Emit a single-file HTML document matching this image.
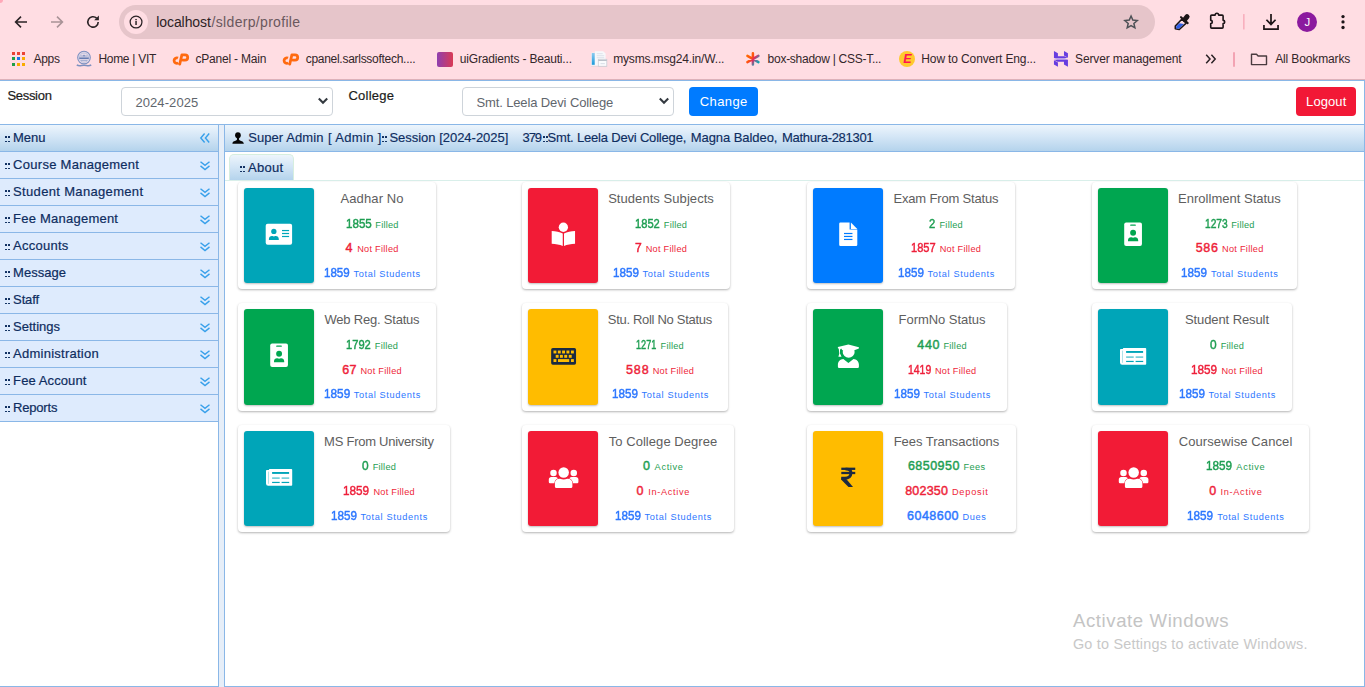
<!DOCTYPE html>
<html><head><meta charset="utf-8"><title>profile</title>
<style>
html,body{margin:0;padding:0;}
body{width:1365px;height:687px;overflow:hidden;position:relative;background:#fff;font-family:"Liberation Sans",sans-serif;}
.t{position:absolute;white-space:nowrap;line-height:1em;font-family:"Liberation Sans",sans-serif;}
.b{position:absolute;box-sizing:border-box;}
svg{position:absolute;overflow:visible;}
</style></head><body>
<div class="b" style="left:0px;top:0px;width:1365px;height:79px;background:#FFDDE3;"></div>
<div class="b" style="left:0px;top:79px;width:1365px;height:1px;background:#DDB2BA;"></div>
<div class="b" style="left:-3px;top:-3px;width:6px;height:6px;background:#FFA8B8;border-radius:3px;filter:blur(0.6px);"></div>
<div class="b" style="left:119px;top:5px;width:1036px;height:34px;background:#E6C5CA;border-radius:17px;"></div>
<div class="b" style="left:123.7px;top:9.9px;width:24.2px;height:24.2px;background:#FFDDE3;border-radius:12.100px;"></div>
<svg style="left:128px;top:14px" width="16" height="16" viewBox="0 0 16 16"><circle cx="8.050" cy="8.050" r="5.900" fill="none" stroke="#2b2326" stroke-width="1.250"/><rect x="7.250" y="7" width="1.600" height="4" fill="#3b3034"/><rect x="7.250" y="4.950" width="1.600" height="1.300" fill="#3b3034"/></svg>
<svg style="left:13px;top:14px" width="16" height="16" viewBox="0 0 16 16"><path d="M14 8H3.2M8 2.6L2.6 8L8 13.4" fill="none" stroke="#2b2326" stroke-width="1.6"/></svg>
<svg style="left:49px;top:14px" width="16" height="16" viewBox="0 0 16 16"><path d="M2 8H12.8M8 2.6L13.4 8L8 13.4" fill="none" stroke="#A99397" stroke-width="1.6"/></svg>
<svg style="left:85px;top:14px" width="16" height="16" viewBox="0 0 16 16"><path d="M13.2 8A5.2 5.2 0 1 1 11.6 4.2" fill="none" stroke="#2b2326" stroke-width="1.6"/><path d="M13.9 1.6V6.3H9.2Z" fill="#2b2326"/></svg>
<span class="t" style="left:156.30px;top:15px;font-size:14px;color:#2c2225;letter-spacing:-0.091px;">localhost</span>
<span class="t" style="left:211.60px;top:15px;font-size:14px;color:#6a585d;letter-spacing:0.316px;">/slderp/profile</span>
<svg style="left:1123px;top:14px" width="16" height="16" viewBox="0 0 16 16"><path d="M8.05 2.05L9.81 6.12L14.23 6.54L10.90 9.48L11.87 13.81L8.05 11.55L4.23 13.81L5.20 9.48L1.87 6.54L6.29 6.12Z" fill="none" stroke="#4d5156" stroke-width="1.500" stroke-linejoin="miter"/></svg>
<svg style="left:1165px;top:5px" width="130" height="35.050" viewBox="0 0 1365 368"><path d="M108 250V222L178 148L222 190L150 258Z" fill="#FFDDE3" stroke="#1c1417" stroke-width="16" stroke-linejoin="round"/><path d="M116 246V226L150 192L198 200L146 250Z" fill="#2F5FE6"/><path d="M168 128L238 190" stroke="#1c1417" stroke-width="22" stroke-linecap="round"/><path d="M208 152L232 122" stroke="#1c1417" stroke-width="52" stroke-linecap="round"/><path d="M480 116Q480 106 490 106H527A18 19 0 0 1 563 106H600Q610 106 610 116V161A17 17 0 0 1 610 195V233Q610 243 600 243H490Q480 243 480 233V195A17 17 0 0 0 480 161Z" fill="none" stroke="#1c1417" stroke-width="17" stroke-linejoin="round"/><rect x="821" y="95" width="14" height="163" rx="6" fill="#F7A6B6"/><path d="M1113 95V203M1065 155L1113 204L1161 155" fill="none" stroke="#1c1417" stroke-width="18"/><path d="M1039 210V253H1187V210" fill="none" stroke="#1c1417" stroke-width="18"/></svg>
<div class="b" style="left:1297px;top:12px;width:20px;height:20px;background:#8B1A9E;border-radius:10px;"></div>
<span class="t" style="left:1304.60px;top:17px;font-size:11.5px;color:#fff;letter-spacing:-0.150px;">J</span>
<svg style="left:1335px;top:12px" width="16" height="20" viewBox="0 0 16 20"><circle cx="8" cy="4.550" r="1.650" fill="#1c1417"/><circle cx="8" cy="9.950" r="1.650" fill="#1c1417"/><circle cx="8" cy="15.500" r="1.650" fill="#1c1417"/></svg>
<div class="b" style="left:12.0px;top:52.2px;width:3px;height:3px;background:#EA4335;"></div>
<div class="b" style="left:17.2px;top:52.2px;width:3px;height:3px;background:#EA4335;"></div>
<div class="b" style="left:22.4px;top:52.2px;width:3px;height:3px;background:#EA4335;"></div>
<div class="b" style="left:12.0px;top:57.400000000000006px;width:3px;height:3px;background:#1E9E48;"></div>
<div class="b" style="left:17.2px;top:57.400000000000006px;width:3px;height:3px;background:#1A73E8;"></div>
<div class="b" style="left:22.4px;top:57.400000000000006px;width:3px;height:3px;background:#F9AB00;"></div>
<div class="b" style="left:12.0px;top:62.6px;width:3px;height:3px;background:#1E9E48;"></div>
<div class="b" style="left:17.2px;top:62.6px;width:3px;height:3px;background:#F9AB00;"></div>
<div class="b" style="left:22.4px;top:62.6px;width:3px;height:3px;background:#F9AB00;"></div>
<span class="t" style="left:33.40px;top:53px;font-size:12px;color:#33262a;letter-spacing:-0.253px;">Apps</span>
<span class="t" style="left:98.40px;top:53px;font-size:12px;color:#33262a;letter-spacing:-0.287px;">Home | VIT</span>
<span class="t" style="left:195.50px;top:53px;font-size:12px;color:#33262a;letter-spacing:-0.207px;">cPanel - Main</span>
<span class="t" style="left:305.70px;top:53px;font-size:12px;color:#33262a;letter-spacing:-0.279px;">cpanel.sarlssoftech....</span>
<span class="t" style="left:459.80px;top:53px;font-size:12px;color:#33262a;letter-spacing:-0.175px;">uiGradients - Beauti...</span>
<span class="t" style="left:613.20px;top:53px;font-size:12px;color:#33262a;letter-spacing:-0.156px;">mysms.msg24.in/W...</span>
<span class="t" style="left:767.60px;top:53px;font-size:12px;color:#33262a;letter-spacing:-0.268px;">box-shadow | CSS-T...</span>
<span class="t" style="left:921.30px;top:53px;font-size:12px;color:#33262a;letter-spacing:-0.128px;">How to Convert Eng...</span>
<span class="t" style="left:1075.10px;top:53px;font-size:12px;color:#33262a;letter-spacing:-0.139px;">Server management</span>
<span class="t" style="left:1275.20px;top:53px;font-size:12px;color:#33262a;letter-spacing:-0.132px;">All Bookmarks</span>
<svg style="left:76px;top:50px" width="16" height="18" viewBox="0 0 16 18"><circle cx="8" cy="7.600" r="6.300" fill="#E9DCEA" stroke="#7C90C0" stroke-width="1.100"/><circle cx="8" cy="7.600" r="4.600" fill="none" stroke="#A9B6D6" stroke-width="0.700"/><path d="M3.300 8.200h9.400" stroke="#5F78B0" stroke-width="1.500"/><path d="M4.300 6h7.400M5 10.300h6" stroke="#8FA0CA" stroke-width="0.900"/><path d="M6.800 6.200l1.200-1.800 1.200 1.800z" fill="#6E84B8"/><path d="M0.800 14.800c2.400 2 4.400.400 7.200.400s4.800 1.600 7.200-.400" fill="none" stroke="#7C90C0" stroke-width="1.500"/></svg>
<svg style="left:170px;top:50px" width="22" height="18" viewBox="0 0 22 18"><g fill="none" stroke="#FF6A10" stroke-width="2.800" stroke-linecap="round" stroke-linejoin="round"><path d="M8 8.100A2.750 2.750 0 1 0 8.300 12.900" stroke-linecap="butt"/><path d="M9.700 14.200L11.900 4.800H15A2.700 2.700 0 0 1 15 10.200H13"/></g></svg>
<svg style="left:280.3px;top:50px" width="22" height="18" viewBox="0 0 22 18"><g fill="none" stroke="#FF6A10" stroke-width="2.800" stroke-linecap="round" stroke-linejoin="round"><path d="M8 8.100A2.750 2.750 0 1 0 8.300 12.900" stroke-linecap="butt"/><path d="M9.700 14.200L11.900 4.800H15A2.700 2.700 0 0 1 15 10.200H13"/></g></svg>
<div class="b" style="left:437px;top:51.5px;width:15.5px;height:15.5px;background:linear-gradient(90deg,#8E3FB0,#D93A55);border-radius:2px;"></div>
<svg style="left:591px;top:51px" width="16" height="16" viewBox="0 0 16 16"><defs><linearGradient id="gb" x1="0" y1="0" x2="0" y2="1"><stop offset="0" stop-color="#8CCBF0"/><stop offset="1" stop-color="#1C9ADB"/></linearGradient></defs><rect x="0.3" y="1.6" width="3.4" height="13.6" fill="#F1F4F8"/><rect x="0.8" y="2" width="3" height="11.8" fill="url(#gb)"/><path d="M3.900 0.200h8.300l2.400 2.400v12.100H3.900z" fill="#F6F8FB"/><path d="M5.700 2.700h6M5.700 4.700h7.500M5.700 6.700h7.500" stroke="#DDE2EA" stroke-width="1"/><rect x="7.300" y="8.300" width="8.500" height="7.200" fill="#FAFBFD" stroke="#C9CED6" stroke-width="0.800"/><path d="M7.300 9.400h8.500" stroke="#B8BEC8" stroke-width="1.100"/><path d="M9.500 12.600h4.300" stroke="#DDE2EA" stroke-width="1.200"/><path d="M0.200 15.300h15.600" stroke="#D9CCD2" stroke-width="0.600"/></svg>
<svg style="left:745px;top:51px" width="16" height="16" viewBox="0 0 16 16"><defs><linearGradient id="ga" gradientUnits="userSpaceOnUse" x1="2" y1="3" x2="14" y2="12"><stop offset="0" stop-color="#FF6E00"/><stop offset="0.38" stop-color="#FF5210"/><stop offset="0.550" stop-color="#E02A62"/><stop offset="0.750" stop-color="#5E7FA0"/><stop offset="1" stop-color="#00AAB2"/></linearGradient></defs><path d="M7.900 2.200v11.400M2.400 4.900l11 6.200M13.400 4.900l-11 6.200" stroke="url(#ga)" stroke-width="2.500" stroke-linecap="round" fill="none"/></svg>
<div class="b" style="left:898.8px;top:50.8px;width:16.3px;height:16.3px;background:#FFC92E;border-radius:8.200px;"></div>
<span class="t" style="left:903.2px;top:53px;font-size:12.500px;font-weight:bold;font-style:italic;color:#FF1250;">E</span>
<svg style="left:1053px;top:51px" width="16" height="16" viewBox="0 0 16 16"><path d="M0.950 -0.080L4.920 2.190V5.220H11.540L14.900 7.110H0.950z" fill="#673DE0"/><path d="M10.970 -0.080L14.940 2.190V6.730L10.970 4.460z" fill="#673DE0"/><path d="M0.950 7.110H11.500L14.940 8.810H4.350z" fill="#B9A0EA"/><path d="M1 8.810H14.940V15.810L10.970 13.540V10.700H4.350z" fill="#673DE0"/><path d="M0.950 9.190L4.920 11.460V15.810L0.950 13.540z" fill="#673DE0"/></svg>
<svg style="left:1205px;top:53px" width="12" height="12" viewBox="0 0 12 12"><path d="M1.200 1.800L5 6L1.200 10.200M6.400 1.800L10.200 6L6.400 10.200" fill="none" stroke="#2b2326" stroke-width="1.5"/></svg>
<div class="b" style="left:1233.3px;top:51.5px;width:1.5px;height:15px;background:#F3A3B3;border-radius:1px;"></div>
<svg style="left:1250px;top:52px" width="18" height="14" viewBox="0 0 18 14"><path d="M1.500 2.200h5l1.600 1.800h8.400v8.600H1.500z" fill="none" stroke="#4a3b3f" stroke-width="1.400" stroke-linejoin="round"/></svg>
<div class="b" style="left:-1px;top:80px;width:1366px;height:45px;background:#fff;border:1px solid #8AB7E7;"></div>
<span class="t" style="left:7.40px;top:89px;font-size:13px;color:#1c1c1c;letter-spacing:-0.297px;-webkit-text-stroke:0.2px #1c1c1c;">Session</span>
<span class="t" style="left:348.40px;top:89px;font-size:13px;color:#1c1c1c;letter-spacing:0.255px;-webkit-text-stroke:0.2px #1c1c1c;">College</span>
<div class="b" style="left:121px;top:87px;width:211.5px;height:28.5px;background:#fff;border:1px solid #ced4da;border-radius:4px;"></div>
<svg style="left:317.1px;top:95px" width="12" height="12" viewBox="0 0 12 12"><path d="M1.800 3.600L6 7.800L10.200 3.600" fill="none" stroke="#343a40" stroke-width="2.100"/></svg>
<div class="b" style="left:462px;top:87px;width:211.5px;height:28.5px;background:#fff;border:1px solid #ced4da;border-radius:4px;"></div>
<svg style="left:658.1px;top:95px" width="12" height="12" viewBox="0 0 12 12"><path d="M1.800 3.600L6 7.800L10.200 3.600" fill="none" stroke="#343a40" stroke-width="2.100"/></svg>
<span class="t" style="left:135.40px;top:96px;font-size:13px;color:#5f666d;letter-spacing:0.095px;">2024-2025</span>
<span class="t" style="left:476.40px;top:96px;font-size:13px;color:#5f666d;letter-spacing:-0.118px;">Smt. Leela Devi College</span>
<div class="b" style="left:689px;top:87px;width:69px;height:29px;background:#007BFF;border-radius:4px;"></div>
<span class="t" style="left:699.80px;top:95px;font-size:13px;color:#fff;letter-spacing:0.387px;">Change</span>
<div class="b" style="left:1296px;top:87px;width:60px;height:29px;background:#F21836;border-radius:4px;"></div>
<span class="t" style="left:1306.10px;top:95px;font-size:13px;color:#fff;letter-spacing:0.084px;">Logout</span>
<div class="b" style="left:-1px;top:124px;width:220px;height:563px;background:#fff;border:1px solid #8AB7E7;"></div>
<div class="b" style="left:219px;top:125px;width:5px;height:562px;background:#E6EEF8;"></div>
<div class="b" style="left:-1px;top:124px;width:220px;height:28px;background:linear-gradient(to bottom,#EDF5FC 0%,#D4E6F6 45%,#B4D3EC 100%);border:1px solid #8AB7E7;"></div>
<div class="b" style="left:5.1px;top:136.4px;width:1.85px;height:1.85px;background:#0E2D5F;border-radius:0.3px;"></div>
<div class="b" style="left:5.1px;top:140.5px;width:1.85px;height:1.85px;background:#0E2D5F;border-radius:0.3px;"></div>
<div class="b" style="left:7.8px;top:136.4px;width:1.85px;height:1.85px;background:#0E2D5F;border-radius:0.3px;"></div>
<div class="b" style="left:7.8px;top:140.5px;width:1.85px;height:1.85px;background:#0E2D5F;border-radius:0.3px;"></div>
<span class="t" style="left:13.10px;top:131px;font-size:13px;color:#0E2D5F;letter-spacing:-0.067px;-webkit-text-stroke:0.2px #0E2D5F;">Menu</span>
<svg style="left:200px;top:133px" width="10" height="10" viewBox="0 0 10 10"><path d="M4.600 0.500L0.800 5L4.600 9.500M9.200 0.500L5.400 5L9.200 9.500" fill="none" stroke="#38A0EA" stroke-width="1.400"/></svg>
<div class="b" style="left:-1px;top:151px;width:220px;height:28px;background:#DEEBFD;border:1px solid #8AB7E7;"></div>
<div class="b" style="left:5.1px;top:163.4px;width:1.85px;height:1.85px;background:#0E2D5F;border-radius:0.3px;"></div>
<div class="b" style="left:5.1px;top:167.5px;width:1.85px;height:1.85px;background:#0E2D5F;border-radius:0.3px;"></div>
<div class="b" style="left:7.8px;top:163.4px;width:1.85px;height:1.85px;background:#0E2D5F;border-radius:0.3px;"></div>
<div class="b" style="left:7.8px;top:167.5px;width:1.85px;height:1.85px;background:#0E2D5F;border-radius:0.3px;"></div>
<span class="t" style="left:13.10px;top:158px;font-size:13px;color:#0E2D5F;letter-spacing:0.280px;-webkit-text-stroke:0.2px #0E2D5F;">Course Management</span>
<svg style="left:200px;top:160.8px" width="10" height="10" viewBox="0 0 10 10"><path d="M0.500 0.700L5 4.300L9.500 0.700M0.500 4.900L5 8.500L9.500 4.900" fill="none" stroke="#38A0EA" stroke-width="1.400"/></svg>
<div class="b" style="left:-1px;top:178px;width:220px;height:28px;background:#DEEBFD;border:1px solid #8AB7E7;"></div>
<div class="b" style="left:5.1px;top:190.4px;width:1.85px;height:1.85px;background:#0E2D5F;border-radius:0.3px;"></div>
<div class="b" style="left:5.1px;top:194.5px;width:1.85px;height:1.85px;background:#0E2D5F;border-radius:0.3px;"></div>
<div class="b" style="left:7.8px;top:190.4px;width:1.85px;height:1.85px;background:#0E2D5F;border-radius:0.3px;"></div>
<div class="b" style="left:7.8px;top:194.5px;width:1.85px;height:1.85px;background:#0E2D5F;border-radius:0.3px;"></div>
<span class="t" style="left:13.10px;top:185px;font-size:13px;color:#0E2D5F;letter-spacing:0.331px;-webkit-text-stroke:0.2px #0E2D5F;">Student Management</span>
<svg style="left:200px;top:187.8px" width="10" height="10" viewBox="0 0 10 10"><path d="M0.500 0.700L5 4.300L9.500 0.700M0.500 4.900L5 8.500L9.500 4.900" fill="none" stroke="#38A0EA" stroke-width="1.400"/></svg>
<div class="b" style="left:-1px;top:205px;width:220px;height:28px;background:#DEEBFD;border:1px solid #8AB7E7;"></div>
<div class="b" style="left:5.1px;top:217.4px;width:1.85px;height:1.85px;background:#0E2D5F;border-radius:0.3px;"></div>
<div class="b" style="left:5.1px;top:221.5px;width:1.85px;height:1.85px;background:#0E2D5F;border-radius:0.3px;"></div>
<div class="b" style="left:7.8px;top:217.4px;width:1.85px;height:1.85px;background:#0E2D5F;border-radius:0.3px;"></div>
<div class="b" style="left:7.8px;top:221.5px;width:1.85px;height:1.85px;background:#0E2D5F;border-radius:0.3px;"></div>
<span class="t" style="left:13.10px;top:212px;font-size:13px;color:#0E2D5F;letter-spacing:0.229px;-webkit-text-stroke:0.2px #0E2D5F;">Fee Management</span>
<svg style="left:200px;top:214.8px" width="10" height="10" viewBox="0 0 10 10"><path d="M0.500 0.700L5 4.300L9.500 0.700M0.500 4.900L5 8.500L9.500 4.900" fill="none" stroke="#38A0EA" stroke-width="1.400"/></svg>
<div class="b" style="left:-1px;top:232px;width:220px;height:28px;background:#DEEBFD;border:1px solid #8AB7E7;"></div>
<div class="b" style="left:5.1px;top:244.4px;width:1.85px;height:1.85px;background:#0E2D5F;border-radius:0.3px;"></div>
<div class="b" style="left:5.1px;top:248.5px;width:1.85px;height:1.85px;background:#0E2D5F;border-radius:0.3px;"></div>
<div class="b" style="left:7.8px;top:244.4px;width:1.85px;height:1.85px;background:#0E2D5F;border-radius:0.3px;"></div>
<div class="b" style="left:7.8px;top:248.5px;width:1.85px;height:1.85px;background:#0E2D5F;border-radius:0.3px;"></div>
<span class="t" style="left:13.10px;top:239px;font-size:13px;color:#0E2D5F;letter-spacing:0.244px;-webkit-text-stroke:0.2px #0E2D5F;">Accounts</span>
<svg style="left:200px;top:241.8px" width="10" height="10" viewBox="0 0 10 10"><path d="M0.500 0.700L5 4.300L9.500 0.700M0.500 4.900L5 8.500L9.500 4.900" fill="none" stroke="#38A0EA" stroke-width="1.400"/></svg>
<div class="b" style="left:-1px;top:259px;width:220px;height:28px;background:#DEEBFD;border:1px solid #8AB7E7;"></div>
<div class="b" style="left:5.1px;top:271.4px;width:1.85px;height:1.85px;background:#0E2D5F;border-radius:0.3px;"></div>
<div class="b" style="left:5.1px;top:275.5px;width:1.85px;height:1.85px;background:#0E2D5F;border-radius:0.3px;"></div>
<div class="b" style="left:7.8px;top:271.4px;width:1.85px;height:1.85px;background:#0E2D5F;border-radius:0.3px;"></div>
<div class="b" style="left:7.8px;top:275.5px;width:1.85px;height:1.85px;background:#0E2D5F;border-radius:0.3px;"></div>
<span class="t" style="left:13.10px;top:266px;font-size:13px;color:#0E2D5F;letter-spacing:0.037px;-webkit-text-stroke:0.2px #0E2D5F;">Message</span>
<svg style="left:200px;top:268.8px" width="10" height="10" viewBox="0 0 10 10"><path d="M0.500 0.700L5 4.300L9.500 0.700M0.500 4.900L5 8.500L9.500 4.900" fill="none" stroke="#38A0EA" stroke-width="1.400"/></svg>
<div class="b" style="left:-1px;top:286px;width:220px;height:28px;background:#DEEBFD;border:1px solid #8AB7E7;"></div>
<div class="b" style="left:5.1px;top:298.4px;width:1.85px;height:1.85px;background:#0E2D5F;border-radius:0.3px;"></div>
<div class="b" style="left:5.1px;top:302.5px;width:1.85px;height:1.85px;background:#0E2D5F;border-radius:0.3px;"></div>
<div class="b" style="left:7.8px;top:298.4px;width:1.85px;height:1.85px;background:#0E2D5F;border-radius:0.3px;"></div>
<div class="b" style="left:7.8px;top:302.5px;width:1.85px;height:1.85px;background:#0E2D5F;border-radius:0.3px;"></div>
<span class="t" style="left:13.10px;top:293px;font-size:13px;color:#0E2D5F;letter-spacing:-0.130px;-webkit-text-stroke:0.2px #0E2D5F;">Staff</span>
<svg style="left:200px;top:295.8px" width="10" height="10" viewBox="0 0 10 10"><path d="M0.500 0.700L5 4.300L9.500 0.700M0.500 4.900L5 8.500L9.500 4.900" fill="none" stroke="#38A0EA" stroke-width="1.400"/></svg>
<div class="b" style="left:-1px;top:313px;width:220px;height:28px;background:#DEEBFD;border:1px solid #8AB7E7;"></div>
<div class="b" style="left:5.1px;top:325.4px;width:1.85px;height:1.85px;background:#0E2D5F;border-radius:0.3px;"></div>
<div class="b" style="left:5.1px;top:329.5px;width:1.85px;height:1.85px;background:#0E2D5F;border-radius:0.3px;"></div>
<div class="b" style="left:7.8px;top:325.4px;width:1.85px;height:1.85px;background:#0E2D5F;border-radius:0.3px;"></div>
<div class="b" style="left:7.8px;top:329.5px;width:1.85px;height:1.85px;background:#0E2D5F;border-radius:0.3px;"></div>
<span class="t" style="left:13.10px;top:320px;font-size:13px;color:#0E2D5F;letter-spacing:0.001px;-webkit-text-stroke:0.2px #0E2D5F;">Settings</span>
<svg style="left:200px;top:322.8px" width="10" height="10" viewBox="0 0 10 10"><path d="M0.500 0.700L5 4.300L9.500 0.700M0.500 4.900L5 8.500L9.500 4.900" fill="none" stroke="#38A0EA" stroke-width="1.400"/></svg>
<div class="b" style="left:-1px;top:340px;width:220px;height:28px;background:#DEEBFD;border:1px solid #8AB7E7;"></div>
<div class="b" style="left:5.1px;top:352.4px;width:1.85px;height:1.85px;background:#0E2D5F;border-radius:0.3px;"></div>
<div class="b" style="left:5.1px;top:356.5px;width:1.85px;height:1.85px;background:#0E2D5F;border-radius:0.3px;"></div>
<div class="b" style="left:7.8px;top:352.4px;width:1.85px;height:1.85px;background:#0E2D5F;border-radius:0.3px;"></div>
<div class="b" style="left:7.8px;top:356.5px;width:1.85px;height:1.85px;background:#0E2D5F;border-radius:0.3px;"></div>
<span class="t" style="left:13.10px;top:347px;font-size:13px;color:#0E2D5F;letter-spacing:0.250px;-webkit-text-stroke:0.2px #0E2D5F;">Administration</span>
<svg style="left:200px;top:349.8px" width="10" height="10" viewBox="0 0 10 10"><path d="M0.500 0.700L5 4.300L9.500 0.700M0.500 4.900L5 8.500L9.500 4.900" fill="none" stroke="#38A0EA" stroke-width="1.400"/></svg>
<div class="b" style="left:-1px;top:367px;width:220px;height:28px;background:#DEEBFD;border:1px solid #8AB7E7;"></div>
<div class="b" style="left:5.1px;top:379.4px;width:1.85px;height:1.85px;background:#0E2D5F;border-radius:0.3px;"></div>
<div class="b" style="left:5.1px;top:383.5px;width:1.85px;height:1.85px;background:#0E2D5F;border-radius:0.3px;"></div>
<div class="b" style="left:7.8px;top:379.4px;width:1.85px;height:1.85px;background:#0E2D5F;border-radius:0.3px;"></div>
<div class="b" style="left:7.8px;top:383.5px;width:1.85px;height:1.85px;background:#0E2D5F;border-radius:0.3px;"></div>
<span class="t" style="left:13.10px;top:374px;font-size:13px;color:#0E2D5F;letter-spacing:0.102px;-webkit-text-stroke:0.2px #0E2D5F;">Fee Account</span>
<svg style="left:200px;top:376.8px" width="10" height="10" viewBox="0 0 10 10"><path d="M0.500 0.700L5 4.300L9.500 0.700M0.500 4.900L5 8.500L9.500 4.900" fill="none" stroke="#38A0EA" stroke-width="1.400"/></svg>
<div class="b" style="left:-1px;top:394px;width:220px;height:28px;background:#DEEBFD;border:1px solid #8AB7E7;"></div>
<div class="b" style="left:5.1px;top:406.4px;width:1.85px;height:1.85px;background:#0E2D5F;border-radius:0.3px;"></div>
<div class="b" style="left:5.1px;top:410.5px;width:1.85px;height:1.85px;background:#0E2D5F;border-radius:0.3px;"></div>
<div class="b" style="left:7.8px;top:406.4px;width:1.85px;height:1.85px;background:#0E2D5F;border-radius:0.3px;"></div>
<div class="b" style="left:7.8px;top:410.5px;width:1.85px;height:1.85px;background:#0E2D5F;border-radius:0.3px;"></div>
<span class="t" style="left:13.10px;top:401px;font-size:13px;color:#0E2D5F;letter-spacing:-0.200px;-webkit-text-stroke:0.2px #0E2D5F;">Reports</span>
<svg style="left:200px;top:403.8px" width="10" height="10" viewBox="0 0 10 10"><path d="M0.500 0.700L5 4.300L9.500 0.700M0.500 4.900L5 8.500L9.500 4.900" fill="none" stroke="#38A0EA" stroke-width="1.400"/></svg>
<div class="b" style="left:224px;top:124px;width:1141px;height:563px;background:#fff;border:1px solid #8AB7E7;"></div>
<div class="b" style="left:224px;top:124px;width:1141px;height:28px;background:linear-gradient(to bottom,#EDF5FC 0%,#D4E6F6 45%,#B4D3EC 100%);border:1px solid #8AB7E7;"></div>
<svg style="left:232px;top:132px" width="12" height="12" viewBox="0 0 12 12"><ellipse cx="5.950" cy="3.300" rx="2.850" ry="3.050" fill="#050505"/><rect x="4.900" y="5.500" width="2.200" height="3.400" fill="#050505"/><path d="M0.400 11.750L0.550 10.700C0.900 9.600 3 9.100 4.900 8.100H7.100C9 9.100 11.100 9.600 11.500 10.700L11.900 11.750Z" fill="#050505"/></svg>
<span class="t" style="left:248.20px;top:131px;font-size:13px;color:#0E2D5F;letter-spacing:0.077px;-webkit-text-stroke:0.15px #0E2D5F;">Super Admin</span>
<span class="t" style="left:327.90px;top:131px;font-size:13px;color:#0E2D5F;letter-spacing:0.366px;-webkit-text-stroke:0.15px #0E2D5F;">[ Admin ]</span>
<span class="t" style="left:389.40px;top:131px;font-size:13px;color:#0E2D5F;letter-spacing:-0.015px;-webkit-text-stroke:0.15px #0E2D5F;">Session [2024-2025]</span>
<span class="t" style="left:522.60px;top:131px;font-size:13px;color:#0E2D5F;letter-spacing:-1.105px;-webkit-text-stroke:0.15px #0E2D5F;">379</span>
<span class="t" style="left:547.50px;top:131px;font-size:13px;color:#0E2D5F;letter-spacing:-0.185px;-webkit-text-stroke:0.15px #0E2D5F;">Smt. Leela Devi College,</span>
<span class="t" style="left:690.70px;top:131px;font-size:13px;color:#0E2D5F;letter-spacing:-0.060px;-webkit-text-stroke:0.15px #0E2D5F;">Magna Baldeo,</span>
<span class="t" style="left:782.00px;top:131px;font-size:13px;color:#0E2D5F;letter-spacing:-0.294px;-webkit-text-stroke:0.15px #0E2D5F;">Mathura-281301</span>
<div class="b" style="left:382.4px;top:136.4px;width:1.85px;height:1.85px;background:#0E2D5F;border-radius:0.3px;"></div>
<div class="b" style="left:382.4px;top:140.5px;width:1.85px;height:1.85px;background:#0E2D5F;border-radius:0.3px;"></div>
<div class="b" style="left:385.1px;top:136.4px;width:1.85px;height:1.85px;background:#0E2D5F;border-radius:0.3px;"></div>
<div class="b" style="left:385.1px;top:140.5px;width:1.85px;height:1.85px;background:#0E2D5F;border-radius:0.3px;"></div>
<div class="b" style="left:543px;top:136.4px;width:1.85px;height:1.85px;background:#0E2D5F;border-radius:0.3px;"></div>
<div class="b" style="left:543px;top:140.5px;width:1.85px;height:1.85px;background:#0E2D5F;border-radius:0.3px;"></div>
<div class="b" style="left:545.7px;top:136.4px;width:1.85px;height:1.85px;background:#0E2D5F;border-radius:0.3px;"></div>
<div class="b" style="left:545.7px;top:140.5px;width:1.85px;height:1.85px;background:#0E2D5F;border-radius:0.3px;"></div>
<div class="b" style="left:225px;top:180px;width:1139px;height:1px;background:#D9EFEA;"></div>
<div class="b" style="left:228.8px;top:153.7px;width:64.8px;height:26.8px;background:linear-gradient(to bottom,#EDF5FC 0%,#D4E6F6 45%,#B4D3EC 100%);border:1px solid #D6EEDF;border-bottom:none;border-radius:5px 5px 0 0;"></div>
<div class="b" style="left:240px;top:166.4px;width:1.85px;height:1.85px;background:#0E2D5F;border-radius:0.3px;"></div>
<div class="b" style="left:240px;top:170.5px;width:1.85px;height:1.85px;background:#0E2D5F;border-radius:0.3px;"></div>
<div class="b" style="left:242.7px;top:166.4px;width:1.85px;height:1.85px;background:#0E2D5F;border-radius:0.3px;"></div>
<div class="b" style="left:242.7px;top:170.5px;width:1.85px;height:1.85px;background:#0E2D5F;border-radius:0.3px;"></div>
<span class="t" style="left:248.00px;top:161px;font-size:13px;color:#0E2D5F;letter-spacing:0.276px;-webkit-text-stroke:0.2px #0E2D5F;">About</span>
<div class="b" style="left:238px;top:182px;width:198px;height:107px;background:#fff;border-radius:4px;box-shadow:0 1px 3px rgba(0,0,0,0.12),0 1px 2px rgba(0,0,0,0.19);"></div>
<div class="b" style="left:244px;top:188px;width:70px;height:95px;background:#00A5B8;border-radius:3px;box-shadow:0 1px 2px rgba(0,0,0,0.25);"></div>
<svg style="left:259.00px;top:215.00px" width="40" height="40" viewBox="0 0 40 40"><rect x="6.7" y="8.85" width="26.4" height="21" rx="2" fill="#fff"/><circle cx="14.85" cy="16.4" r="2.65" fill="#00A5B8"/><path d="M9.9 25.1v-1.100c0-1.700 1.300-2.900 3-2.900h.5c.9.400 2 .400 2.900 0h.5c1.700 0 3 1.200 3 2.900v1.100z" fill="#00A5B8"/><rect x="23" y="14.950000000000001" width="7.100" height="1.200" fill="#00A5B8"/><rect x="23" y="17.9" width="7.100" height="1.200" fill="#00A5B8"/><rect x="23" y="20.9" width="7.100" height="1.200" fill="#00A5B8"/></svg>
<span class="t" style="left:340.50px;top:192px;font-size:13px;color:#5e5e5e;letter-spacing:0.107px;">Aadhar No</span>
<span class="t" style="left:345.50px;top:218px;font-size:12.5px;color:#1E9E52;transform:scaleX(0.9276);transform-origin:0 50%;-webkit-text-stroke:0.45px #1E9E52;">1855</span>
<span class="t" style="left:375.30px;top:221px;font-size:9.2px;color:#1E9E52;letter-spacing:0.242px;">Filled</span>
<span class="t" style="left:345.50px;top:242px;font-size:12.5px;color:#EE1F3A;letter-spacing:0.762px;-webkit-text-stroke:0.45px #EE1F3A;">4</span>
<span class="t" style="left:357.20px;top:245px;font-size:9.2px;color:#EE1F3A;letter-spacing:0.270px;">Not Filled</span>
<span class="t" style="left:323.75px;top:267px;font-size:12.5px;color:#2C77FF;transform:scaleX(0.9240);transform-origin:0 50%;-webkit-text-stroke:0.45px #2C77FF;">1859</span>
<span class="t" style="left:353.45px;top:270px;font-size:9.2px;color:#2C77FF;letter-spacing:0.652px;">Total Students</span>
<div class="b" style="left:522px;top:182px;width:208px;height:107px;background:#fff;border-radius:4px;box-shadow:0 1px 3px rgba(0,0,0,0.12),0 1px 2px rgba(0,0,0,0.19);"></div>
<div class="b" style="left:528px;top:188px;width:70px;height:95px;background:#F21B36;border-radius:3px;box-shadow:0 1px 2px rgba(0,0,0,0.25);"></div>
<svg style="left:543.00px;top:215.00px" width="40" height="40" viewBox="0 0 40 40"><circle cx="20.38" cy="12.23" r="4.65" fill="#fff"/><path d="M8.700 16.100c4 .100 8 1 11.050 2.300v12.500c-3.050-1.300-7.050-2.100-11.050-2.200z" fill="#fff"/><path d="M32.050 16.100c-4 .100-8 1-11.050 2.300v12.500c3.050-1.300 7.050-2.100 11.050-2.200z" fill="#fff"/></svg>
<span class="t" style="left:608.15px;top:192px;font-size:13px;color:#5e5e5e;letter-spacing:0.058px;">Students Subjects</span>
<span class="t" style="left:635.00px;top:218px;font-size:12.5px;color:#1E9E52;transform:scaleX(0.8917);transform-origin:0 50%;-webkit-text-stroke:0.45px #1E9E52;">1852</span>
<span class="t" style="left:663.80px;top:221px;font-size:9.2px;color:#1E9E52;letter-spacing:0.242px;">Filled</span>
<span class="t" style="left:635.00px;top:242px;font-size:12.5px;color:#EE1F3A;transform:scaleX(0.9658);transform-origin:0 50%;-webkit-text-stroke:0.45px #EE1F3A;">7</span>
<span class="t" style="left:645.70px;top:245px;font-size:9.2px;color:#EE1F3A;letter-spacing:0.270px;">Not Filled</span>
<span class="t" style="left:612.65px;top:267px;font-size:12.5px;color:#2C77FF;transform:scaleX(0.9312);transform-origin:0 50%;-webkit-text-stroke:0.45px #2C77FF;">1859</span>
<span class="t" style="left:642.55px;top:270px;font-size:9.2px;color:#2C77FF;letter-spacing:0.652px;">Total Students</span>
<div class="b" style="left:807px;top:182px;width:208px;height:107px;background:#fff;border-radius:4px;box-shadow:0 1px 3px rgba(0,0,0,0.12),0 1px 2px rgba(0,0,0,0.19);"></div>
<div class="b" style="left:813px;top:188px;width:70px;height:95px;background:#007BFF;border-radius:3px;box-shadow:0 1px 2px rgba(0,0,0,0.25);"></div>
<svg style="left:828.00px;top:215.00px" width="40" height="40" viewBox="0 0 40 40"><path d="M12.400 7.600h9.200v6.900h7.700v15.300a1.200 1.200 0 0 1-1.200 1.200H12.400a1.200 1.200 0 0 1-1.200-1.200V8.800a1.200 1.200 0 0 1 1.200-1.200z" fill="#fff"/><path d="M22.900 7.600l6.400 6.300v0h-6.400z" fill="#fff"/><rect x="16" y="17.9" width="8.450" height="1.200" fill="#007BFF"/><rect x="16" y="20.849999999999998" width="8.450" height="1.200" fill="#007BFF"/><rect x="16" y="23.849999999999998" width="8.450" height="1.200" fill="#007BFF"/></svg>
<span class="t" style="left:893.50px;top:192px;font-size:13px;color:#5e5e5e;letter-spacing:-0.176px;">Exam From Status</span>
<span class="t" style="left:929.30px;top:218px;font-size:12.5px;color:#1E9E52;transform:scaleX(0.8937);transform-origin:0 50%;-webkit-text-stroke:0.45px #1E9E52;">2</span>
<span class="t" style="left:939.50px;top:221px;font-size:9.2px;color:#1E9E52;letter-spacing:0.242px;">Filled</span>
<span class="t" style="left:911.00px;top:242px;font-size:12.5px;color:#EE1F3A;transform:scaleX(0.8881);transform-origin:0 50%;-webkit-text-stroke:0.45px #EE1F3A;">1857</span>
<span class="t" style="left:939.70px;top:245px;font-size:9.2px;color:#EE1F3A;letter-spacing:0.270px;">Not Filled</span>
<span class="t" style="left:897.65px;top:267px;font-size:12.5px;color:#2C77FF;transform:scaleX(0.9312);transform-origin:0 50%;-webkit-text-stroke:0.45px #2C77FF;">1859</span>
<span class="t" style="left:927.55px;top:270px;font-size:9.2px;color:#2C77FF;letter-spacing:0.652px;">Total Students</span>
<div class="b" style="left:1092px;top:182px;width:205px;height:107px;background:#fff;border-radius:4px;box-shadow:0 1px 3px rgba(0,0,0,0.12),0 1px 2px rgba(0,0,0,0.19);"></div>
<div class="b" style="left:1098px;top:188px;width:70px;height:95px;background:#00A650;border-radius:3px;box-shadow:0 1px 2px rgba(0,0,0,0.25);"></div>
<svg style="left:1113.00px;top:215.00px" width="40" height="40" viewBox="0 0 40 40"><rect x="11.200" y="7.600" width="17.750" height="23.300" rx="1.900" fill="#fff"/><rect x="17.200" y="9.600" width="5.600" height="1.200" rx="0.400" fill="#00A650"/><circle cx="20.090" cy="17.760" r="2.950" fill="#00A650"/><path d="M15 26.200v-1c0-1.700 1.300-2.900 3-2.900h.400c1.100.500 2.300.500 3.400 0h.400c1.700 0 3 1.200 3 2.900v1z" fill="#00A650"/></svg>
<span class="t" style="left:1178.10px;top:192px;font-size:13px;color:#5e5e5e;letter-spacing:0.010px;">Enrollment Status</span>
<span class="t" style="left:1204.55px;top:218px;font-size:12.5px;color:#1E9E52;transform:scaleX(0.8162);transform-origin:0 50%;-webkit-text-stroke:0.45px #1E9E52;">1273</span>
<span class="t" style="left:1231.25px;top:221px;font-size:9.2px;color:#1E9E52;letter-spacing:0.242px;">Filled</span>
<span class="t" style="left:1195.65px;top:242px;font-size:12.5px;color:#EE1F3A;letter-spacing:0.763px;-webkit-text-stroke:0.45px #EE1F3A;">586</span>
<span class="t" style="left:1222.05px;top:245px;font-size:9.2px;color:#EE1F3A;letter-spacing:0.270px;">Not Filled</span>
<span class="t" style="left:1181.15px;top:267px;font-size:12.5px;color:#2C77FF;transform:scaleX(0.9312);transform-origin:0 50%;-webkit-text-stroke:0.45px #2C77FF;">1859</span>
<span class="t" style="left:1211.05px;top:270px;font-size:9.2px;color:#2C77FF;letter-spacing:0.652px;">Total Students</span>
<div class="b" style="left:238px;top:303px;width:198px;height:108px;background:#fff;border-radius:4px;box-shadow:0 1px 3px rgba(0,0,0,0.12),0 1px 2px rgba(0,0,0,0.19);"></div>
<div class="b" style="left:244px;top:309px;width:70px;height:96px;background:#00A650;border-radius:3px;box-shadow:0 1px 2px rgba(0,0,0,0.25);"></div>
<svg style="left:259.00px;top:336.00px" width="40" height="40" viewBox="0 0 40 40"><rect x="11.200" y="7.600" width="17.750" height="23.300" rx="1.900" fill="#fff"/><rect x="17.200" y="9.600" width="5.600" height="1.200" rx="0.400" fill="#00A650"/><circle cx="20.090" cy="17.760" r="2.950" fill="#00A650"/><path d="M15 26.200v-1c0-1.700 1.300-2.900 3-2.900h.400c1.100.500 2.300.500 3.400 0h.400c1.700 0 3 1.200 3 2.900v1z" fill="#00A650"/></svg>
<span class="t" style="left:324.40px;top:313px;font-size:13px;color:#5e5e5e;letter-spacing:-0.201px;">Web Reg. Status</span>
<span class="t" style="left:346.00px;top:339px;font-size:12.5px;color:#1E9E52;transform:scaleX(0.8917);transform-origin:0 50%;-webkit-text-stroke:0.45px #1E9E52;">1792</span>
<span class="t" style="left:374.80px;top:342px;font-size:9.2px;color:#1E9E52;letter-spacing:0.242px;">Filled</span>
<span class="t" style="left:342.25px;top:364px;font-size:12.5px;color:#EE1F3A;letter-spacing:0.325px;-webkit-text-stroke:0.45px #EE1F3A;">67</span>
<span class="t" style="left:360.45px;top:367px;font-size:9.2px;color:#EE1F3A;letter-spacing:0.270px;">Not Filled</span>
<span class="t" style="left:323.50px;top:388px;font-size:12.5px;color:#2C77FF;transform:scaleX(0.9420);transform-origin:0 50%;-webkit-text-stroke:0.45px #2C77FF;">1859</span>
<span class="t" style="left:353.70px;top:391px;font-size:9.2px;color:#2C77FF;letter-spacing:0.652px;">Total Students</span>
<div class="b" style="left:522px;top:303px;width:206px;height:108px;background:#fff;border-radius:4px;box-shadow:0 1px 3px rgba(0,0,0,0.12),0 1px 2px rgba(0,0,0,0.19);"></div>
<div class="b" style="left:528px;top:309px;width:70px;height:96px;background:#FFBC00;border-radius:3px;box-shadow:0 1px 2px rgba(0,0,0,0.25);"></div>
<svg style="left:543.00px;top:336.00px" width="40" height="40" viewBox="0 0 40 40"><rect x="8.150" y="12.050" width="24.900" height="16.750" rx="1.700" fill="#1B2A41"/><rect x="10.50" y="14.550" width="2.900" height="2.900" fill="#FFBC00"/><rect x="14.85" y="14.550" width="2.900" height="2.900" fill="#FFBC00"/><rect x="19.10" y="14.550" width="2.900" height="2.900" fill="#FFBC00"/><rect x="23.45" y="14.550" width="2.900" height="2.900" fill="#FFBC00"/><rect x="27.95" y="14.550" width="2.900" height="2.900" fill="#FFBC00"/><rect x="12.70" y="18.900" width="2.900" height="2.900" fill="#FFBC00"/><rect x="16.95" y="18.900" width="2.900" height="2.900" fill="#FFBC00"/><rect x="21.25" y="18.900" width="2.900" height="2.900" fill="#FFBC00"/><rect x="25.80" y="18.900" width="2.900" height="2.900" fill="#FFBC00"/><rect x="10.500" y="23.100" width="2.900" height="2.900" fill="#FFBC00"/><rect x="15" y="23.100" width="11.200" height="2.900" fill="#FFBC00"/><rect x="27.950" y="23.100" width="2.900" height="2.900" fill="#FFBC00"/></svg>
<span class="t" style="left:607.80px;top:313px;font-size:13px;color:#5e5e5e;letter-spacing:-0.303px;">Stu. Roll No Status</span>
<span class="t" style="left:636.25px;top:339px;font-size:12.5px;color:#1E9E52;transform:scaleX(0.7299);transform-origin:0 50%;-webkit-text-stroke:0.45px #1E9E52;">1271</span>
<span class="t" style="left:660.55px;top:342px;font-size:9.2px;color:#1E9E52;letter-spacing:0.242px;">Filled</span>
<span class="t" style="left:626.00px;top:364px;font-size:12.5px;color:#EE1F3A;letter-spacing:0.913px;-webkit-text-stroke:0.45px #EE1F3A;">588</span>
<span class="t" style="left:652.70px;top:367px;font-size:9.2px;color:#EE1F3A;letter-spacing:0.270px;">Not Filled</span>
<span class="t" style="left:611.65px;top:388px;font-size:12.5px;color:#2C77FF;transform:scaleX(0.9312);transform-origin:0 50%;-webkit-text-stroke:0.45px #2C77FF;">1859</span>
<span class="t" style="left:641.55px;top:391px;font-size:9.2px;color:#2C77FF;letter-spacing:0.652px;">Total Students</span>
<div class="b" style="left:807px;top:303px;width:200px;height:108px;background:#fff;border-radius:4px;box-shadow:0 1px 3px rgba(0,0,0,0.12),0 1px 2px rgba(0,0,0,0.19);"></div>
<div class="b" style="left:813px;top:309px;width:70px;height:96px;background:#00A650;border-radius:3px;box-shadow:0 1px 2px rgba(0,0,0,0.25);"></div>
<svg style="left:828.00px;top:336.00px" width="40" height="40" viewBox="0 0 40 40"><circle cx="20.670" cy="15.900" r="5.950" fill="#fff"/><path d="M9.900 11.100L20.400 8.500L30.900 11.300V12.400L27 13.900H14L9.900 12.300z" fill="#fff"/><path d="M14 11h13v3.200H14z" fill="#fff"/><path d="M10.700 12.300h1.300v5.200l1.500 3.200h-3.100l.9-3.200z" fill="#fff"/><rect x="12.700" y="12.800" width="1.100" height="3" fill="#00A650"/><path d="M15.300 23l5.100 4.100 5.100-4.100c3.100.100 5.400 2.500 5.400 5.600v2.200a1.200 1.200 0 0 1-1.200 1.200H11.100a1.200 1.200 0 0 1-1.200-1.200v-2.200c0-3.100 2.300-5.500 5.400-5.600z" fill="#fff"/></svg>
<span class="t" style="left:898.60px;top:313px;font-size:13px;color:#5e5e5e;letter-spacing:-0.052px;">FormNo Status</span>
<span class="t" style="left:917.35px;top:339px;font-size:12.5px;color:#1E9E52;letter-spacing:0.613px;-webkit-text-stroke:0.45px #1E9E52;">440</span>
<span class="t" style="left:943.45px;top:342px;font-size:9.2px;color:#1E9E52;letter-spacing:0.242px;">Filled</span>
<span class="t" style="left:907.75px;top:364px;font-size:12.5px;color:#EE1F3A;transform:scaleX(0.8342);transform-origin:0 50%;-webkit-text-stroke:0.45px #EE1F3A;">1419</span>
<span class="t" style="left:934.95px;top:367px;font-size:9.2px;color:#EE1F3A;letter-spacing:0.270px;">Not Filled</span>
<span class="t" style="left:893.65px;top:388px;font-size:12.5px;color:#2C77FF;transform:scaleX(0.9312);transform-origin:0 50%;-webkit-text-stroke:0.45px #2C77FF;">1859</span>
<span class="t" style="left:923.55px;top:391px;font-size:9.2px;color:#2C77FF;letter-spacing:0.652px;">Total Students</span>
<div class="b" style="left:1092px;top:303px;width:200px;height:108px;background:#fff;border-radius:4px;box-shadow:0 1px 3px rgba(0,0,0,0.12),0 1px 2px rgba(0,0,0,0.19);"></div>
<div class="b" style="left:1098px;top:309px;width:70px;height:96px;background:#00A5B8;border-radius:3px;box-shadow:0 1px 2px rgba(0,0,0,0.25);"></div>
<svg style="left:1113.00px;top:336.00px" width="40" height="40" viewBox="0 0 40 40"><path d="M11.300 11.950h21.100a.8.800 0 0 1 .8.800v15.250a.8.800 0 0 1-.8.800H9.200a2.200 2.200 0 0 1-2.200-2.200V13.900a.8.800 0 0 1 .8-.8h2.100v-.350a.8.800 0 0 1 .8-.8z" fill="#fff"/><rect x="9" y="14.600" width="0.700" height="12.200" fill="#00A5B8" opacity="0.450"/><rect x="13.100" y="15" width="17" height="1.900" fill="#00A5B8"/><rect x="13.1" y="20.450" width="7.600" height="1.300" fill="#00A5B8" opacity="0.700"/><rect x="13.1" y="24.850" width="7.600" height="1.200" fill="#00A5B8"/><rect x="22.6" y="20.450" width="7.600" height="1.300" fill="#00A5B8" opacity="0.700"/><rect x="22.6" y="24.850" width="7.600" height="1.200" fill="#00A5B8"/></svg>
<span class="t" style="left:1185.00px;top:313px;font-size:13px;color:#5e5e5e;letter-spacing:-0.098px;">Student Result</span>
<span class="t" style="left:1210.10px;top:339px;font-size:12.5px;color:#1E9E52;transform:scaleX(0.9514);transform-origin:0 50%;-webkit-text-stroke:0.45px #1E9E52;">0</span>
<span class="t" style="left:1220.70px;top:342px;font-size:9.2px;color:#1E9E52;letter-spacing:0.242px;">Filled</span>
<span class="t" style="left:1191.30px;top:364px;font-size:12.5px;color:#EE1F3A;transform:scaleX(0.9384);transform-origin:0 50%;-webkit-text-stroke:0.45px #EE1F3A;">1859</span>
<span class="t" style="left:1221.40px;top:367px;font-size:9.2px;color:#EE1F3A;letter-spacing:0.270px;">Not Filled</span>
<span class="t" style="left:1178.65px;top:388px;font-size:12.5px;color:#2C77FF;transform:scaleX(0.9312);transform-origin:0 50%;-webkit-text-stroke:0.45px #2C77FF;">1859</span>
<span class="t" style="left:1208.55px;top:391px;font-size:9.2px;color:#2C77FF;letter-spacing:0.652px;">Total Students</span>
<div class="b" style="left:238px;top:425px;width:212px;height:107px;background:#fff;border-radius:4px;box-shadow:0 1px 3px rgba(0,0,0,0.12),0 1px 2px rgba(0,0,0,0.19);"></div>
<div class="b" style="left:244px;top:431px;width:70px;height:95px;background:#00A5B8;border-radius:3px;box-shadow:0 1px 2px rgba(0,0,0,0.25);"></div>
<svg style="left:259.00px;top:457.00px" width="40" height="40" viewBox="0 0 40 40"><path d="M11.300 11.950h21.100a.8.800 0 0 1 .8.800v15.250a.8.800 0 0 1-.8.800H9.200a2.200 2.200 0 0 1-2.200-2.200V13.900a.8.800 0 0 1 .8-.8h2.100v-.350a.8.800 0 0 1 .8-.8z" fill="#fff"/><rect x="9" y="14.600" width="0.700" height="12.200" fill="#00A5B8" opacity="0.450"/><rect x="13.100" y="15" width="17" height="1.900" fill="#00A5B8"/><rect x="13.1" y="20.450" width="7.600" height="1.300" fill="#00A5B8" opacity="0.700"/><rect x="13.1" y="24.850" width="7.600" height="1.200" fill="#00A5B8"/><rect x="22.6" y="20.450" width="7.600" height="1.300" fill="#00A5B8" opacity="0.700"/><rect x="22.6" y="24.850" width="7.600" height="1.200" fill="#00A5B8"/></svg>
<span class="t" style="left:324.10px;top:435px;font-size:13px;color:#5e5e5e;letter-spacing:-0.255px;">MS From University</span>
<span class="t" style="left:362.10px;top:460px;font-size:12.5px;color:#1E9E52;transform:scaleX(0.9514);transform-origin:0 50%;-webkit-text-stroke:0.45px #1E9E52;">0</span>
<span class="t" style="left:372.70px;top:463px;font-size:9.2px;color:#1E9E52;letter-spacing:0.242px;">Filled</span>
<span class="t" style="left:343.30px;top:485px;font-size:12.5px;color:#EE1F3A;transform:scaleX(0.9384);transform-origin:0 50%;-webkit-text-stroke:0.45px #EE1F3A;">1859</span>
<span class="t" style="left:373.40px;top:488px;font-size:9.2px;color:#EE1F3A;letter-spacing:0.270px;">Not Filled</span>
<span class="t" style="left:330.65px;top:510px;font-size:12.5px;color:#2C77FF;transform:scaleX(0.9312);transform-origin:0 50%;-webkit-text-stroke:0.45px #2C77FF;">1859</span>
<span class="t" style="left:360.55px;top:513px;font-size:9.2px;color:#2C77FF;letter-spacing:0.652px;">Total Students</span>
<div class="b" style="left:522px;top:425px;width:212px;height:107px;background:#fff;border-radius:4px;box-shadow:0 1px 3px rgba(0,0,0,0.12),0 1px 2px rgba(0,0,0,0.19);"></div>
<div class="b" style="left:528px;top:431px;width:70px;height:95px;background:#F21B36;border-radius:3px;box-shadow:0 1px 2px rgba(0,0,0,0.25);"></div>
<svg style="left:543.00px;top:457.00px" width="40" height="40" viewBox="0 0 40 40"><circle cx="10.480" cy="16" r="3.250" fill="#fff"/><circle cx="30.740" cy="16" r="3.250" fill="#fff"/><path d="M8.300 20.100h4.300c1.400 0 2.500 1.100 2.500 2.500v3.600H7a1.200 1.200 0 0 1-1.200-1.200v-2.400c0-1.400 1.100-2.500 2.500-2.500z" fill="#fff"/><path d="M32.900 20.100h-4.300c-1.400 0-2.500 1.100-2.500 2.500v3.600h8.100a1.200 1.200 0 0 0 1.200-1.200v-2.400c0-1.400-1.100-2.500-2.500-2.500z" fill="#fff"/><circle cx="20.670" cy="15.430" r="5.250" fill="#fff" stroke="#F21B36" stroke-width="0"/><path d="M16.500 21.800h.6c2.300 1 4.800 1 7.100 0h.6c2.600 0 4.600 2 4.600 4.600v3a1.500 1.500 0 0 1-1.500 1.500H13.400a1.500 1.500 0 0 1-1.500-1.500v-3c0-2.600 2-4.600 4.600-4.600z" fill="#fff" stroke="#F21B36" stroke-width="1.100" paint-order="stroke"/></svg>
<span class="t" style="left:608.70px;top:435px;font-size:13px;color:#5e5e5e;letter-spacing:0.056px;">To College Degree</span>
<span class="t" style="left:643.00px;top:460px;font-size:12.5px;color:#1E9E52;letter-spacing:0.663px;-webkit-text-stroke:0.45px #1E9E52;">0</span>
<span class="t" style="left:654.60px;top:463px;font-size:9.2px;color:#1E9E52;letter-spacing:0.666px;">Active</span>
<span class="t" style="left:636.50px;top:485px;font-size:12.5px;color:#EE1F3A;letter-spacing:0.763px;-webkit-text-stroke:0.45px #EE1F3A;">0</span>
<span class="t" style="left:648.20px;top:488px;font-size:9.2px;color:#EE1F3A;letter-spacing:0.689px;">In-Active</span>
<span class="t" style="left:614.65px;top:510px;font-size:12.5px;color:#2C77FF;transform:scaleX(0.9312);transform-origin:0 50%;-webkit-text-stroke:0.45px #2C77FF;">1859</span>
<span class="t" style="left:644.55px;top:513px;font-size:9.2px;color:#2C77FF;letter-spacing:0.652px;">Total Students</span>
<div class="b" style="left:807px;top:425px;width:209px;height:107px;background:#fff;border-radius:4px;box-shadow:0 1px 3px rgba(0,0,0,0.12),0 1px 2px rgba(0,0,0,0.19);"></div>
<div class="b" style="left:813px;top:431px;width:70px;height:95px;background:#FFBC00;border-radius:3px;box-shadow:0 1px 2px rgba(0,0,0,0.25);"></div>
<svg style="left:828.00px;top:457.00px" width="40" height="40" viewBox="0 0 40 40"><rect x="13.300" y="10.650" width="13.950" height="2.300" fill="#1B2A41"/><rect x="13.300" y="14.850" width="13.950" height="2.300" fill="#1B2A41"/><path d="M17.500 12.100h1.200c2.700 0 4.300 1.600 4.300 4c0 3-2.400 5.100-6 5.100h-3.700" fill="none" stroke="#1B2A41" stroke-width="2.900"/><path d="M13.300 20.400h3.700l8 9.600h-4.500l-7.200-7.200z" fill="#1B2A41"/></svg>
<span class="t" style="left:893.70px;top:435px;font-size:13px;color:#5e5e5e;letter-spacing:-0.038px;">Fees Transactions</span>
<span class="t" style="left:907.90px;top:460px;font-size:12.5px;color:#1E9E52;letter-spacing:0.469px;-webkit-text-stroke:0.45px #1E9E52;">6850950</span>
<span class="t" style="left:963.40px;top:463px;font-size:9.2px;color:#1E9E52;letter-spacing:0.410px;">Fees</span>
<span class="t" style="left:905.15px;top:485px;font-size:12.5px;color:#EE1F3A;letter-spacing:0.222px;-webkit-text-stroke:0.45px #EE1F3A;">802350</span>
<span class="t" style="left:951.95px;top:488px;font-size:9.2px;color:#EE1F3A;letter-spacing:0.785px;">Deposit</span>
<span class="t" style="left:907.05px;top:510px;font-size:12.5px;color:#2C77FF;letter-spacing:0.469px;-webkit-text-stroke:0.45px #2C77FF;">6048600</span>
<span class="t" style="left:962.55px;top:513px;font-size:9.2px;color:#2C77FF;letter-spacing:0.639px;">Dues</span>
<div class="b" style="left:1092px;top:425px;width:217px;height:107px;background:#fff;border-radius:4px;box-shadow:0 1px 3px rgba(0,0,0,0.12),0 1px 2px rgba(0,0,0,0.19);"></div>
<div class="b" style="left:1098px;top:431px;width:70px;height:95px;background:#F21B36;border-radius:3px;box-shadow:0 1px 2px rgba(0,0,0,0.25);"></div>
<svg style="left:1113.00px;top:457.00px" width="40" height="40" viewBox="0 0 40 40"><circle cx="10.480" cy="16" r="3.250" fill="#fff"/><circle cx="30.740" cy="16" r="3.250" fill="#fff"/><path d="M8.300 20.100h4.300c1.400 0 2.500 1.100 2.500 2.500v3.600H7a1.200 1.200 0 0 1-1.200-1.200v-2.400c0-1.400 1.100-2.500 2.500-2.500z" fill="#fff"/><path d="M32.900 20.100h-4.300c-1.400 0-2.500 1.100-2.500 2.500v3.600h8.100a1.200 1.200 0 0 0 1.200-1.200v-2.400c0-1.400-1.100-2.500-2.500-2.500z" fill="#fff"/><circle cx="20.670" cy="15.430" r="5.250" fill="#fff" stroke="#F21B36" stroke-width="0"/><path d="M16.500 21.800h.6c2.300 1 4.800 1 7.100 0h.6c2.600 0 4.600 2 4.600 4.600v3a1.500 1.500 0 0 1-1.500 1.500H13.400a1.500 1.500 0 0 1-1.500-1.500v-3c0-2.600 2-4.600 4.600-4.600z" fill="#fff" stroke="#F21B36" stroke-width="1.100" paint-order="stroke"/></svg>
<span class="t" style="left:1178.70px;top:435px;font-size:13px;color:#5e5e5e;letter-spacing:0.100px;">Coursewise Cancel</span>
<span class="t" style="left:1206.25px;top:460px;font-size:12.5px;color:#1E9E52;transform:scaleX(0.9384);transform-origin:0 50%;-webkit-text-stroke:0.45px #1E9E52;">1859</span>
<span class="t" style="left:1236.35px;top:463px;font-size:9.2px;color:#1E9E52;letter-spacing:0.666px;">Active</span>
<span class="t" style="left:1209.20px;top:485px;font-size:12.5px;color:#EE1F3A;letter-spacing:0.362px;-webkit-text-stroke:0.45px #EE1F3A;">0</span>
<span class="t" style="left:1220.50px;top:488px;font-size:9.2px;color:#EE1F3A;letter-spacing:0.689px;">In-Active</span>
<span class="t" style="left:1187.05px;top:510px;font-size:12.5px;color:#2C77FF;transform:scaleX(0.9384);transform-origin:0 50%;-webkit-text-stroke:0.45px #2C77FF;">1859</span>
<span class="t" style="left:1217.15px;top:513px;font-size:9.2px;color:#2C77FF;letter-spacing:0.652px;">Total Students</span>
<span class="t" style="left:1072.90px;top:612px;font-size:18.6px;color:#c4c4c4;letter-spacing:0.590px;">Activate Windows</span>
<span class="t" style="left:1072.90px;top:637px;font-size:14.4px;color:#c8c8c8;letter-spacing:0.218px;">Go to Settings to activate Windows.</span>
</body></html>
